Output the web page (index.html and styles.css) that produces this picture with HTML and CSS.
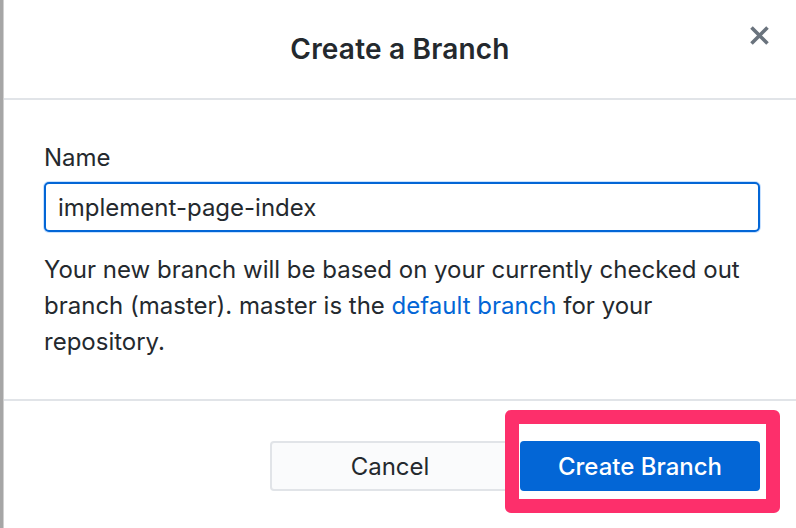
FILE: index.html
```html
<!DOCTYPE html>
<html lang="en">
<head>
<meta charset="utf-8">
<title>Create a Branch</title>
<link rel="stylesheet" href="styles.css">
</head>
<body>
<div class="screen">
  <div class="dialog">
    <header class="dialog-header">
      <span></span>
      <h1 class="dialog-title">Create a Branch</h1>
      <button class="close" aria-label="Close">
        <svg width="21" height="21" viewBox="0 0 21 21"><path d="M2.5 2.5 L18.5 18.5 M18.5 2.5 L2.5 18.5" stroke="#6a737d" stroke-width="3.6" stroke-linecap="butt" fill="none"/></svg>
      </button>
    </header>
    <section class="dialog-content">
      <label class="field-label" for="branch-name">Name</label>
      <input class="text-input" id="branch-name" type="text" value="implement-page-index">
      <p class="description">Your new branch will be based on your currently checked out branch (master). master is the <a class="link" href="#">default branch</a> for your repository.</p>
    </section>
    <footer class="dialog-footer">
      <button class="btn btn-secondary">Cancel</button>
      <span class="highlight-wrap">
        <button class="btn btn-primary">Create Branch</button>
        <span class="highlight"></span>
      </span>
    </footer>
  </div>
</div>
</body>
</html>
```
FILE: styles.css
```css
html, body {
  margin: 0;
  padding: 0;
  background: #ffffff;
}
body {
  font-family: "Inter", "Liberation Sans", sans-serif;
  color: #24292e;
  width: 796px;
  height: 528px;
  overflow: hidden;
}
.screen {
  display: flex;
  height: 528px;
  background: #a6a6a6;
  padding-left: 3px;
}
.dialog {
  flex: 1;
  background: #ffffff;
  border-left: 1px solid #d0d0d0;
  display: flex;
  flex-direction: column;
}
.dialog-header {
  height: 98px;
  border-bottom: 2px solid #e1e4e8;
  display: grid;
  grid-template-columns: 1fr auto 1fr;
  align-items: start;
}
.dialog-title {
  margin: 0;
  padding-top: 31px;
  font-size: 28px;
  line-height: 36px;
  font-weight: 600;
  letter-spacing: 0.2px;
}
.close {
  justify-self: end;
  margin: 25px 26px 0 0;
  padding: 0;
  border: 0;
  background: none;
  width: 21px;
  height: 21px;
  display: flex;
}
.dialog-content {
  padding: 40px 36px 39px 40px;
  display: flex;
  flex-direction: column;
  font-size: 24px;
  line-height: 36px;
  border-bottom: 2px solid #e1e4e8;
}
.field-label {
  display: block;
  margin-bottom: 6px;
}
.text-input {
  box-sizing: border-box;
  height: 50px;
  margin: 0;
  padding: 0 12px;
  border: 2px solid #0366d6;
  border-radius: 5px;
  box-shadow: 0 0 0 1px #c8e1ff;
  font-family: inherit;
  font-size: 24px;
  color: #24292e;
  outline: none;
}
.description {
  margin: 20px 0 0 0;
}
.link {
  color: #0366d6;
  text-decoration: none;
}
.dialog-footer {
  padding: 40px 36px 0 0;
  display: flex;
  justify-content: flex-end;
  gap: 10px;
}
.btn {
  box-sizing: border-box;
  width: 240px;
  height: 50px;
  border-radius: 4px;
  font-family: inherit;
  font-size: 24px;
  padding: 0;
}
.btn-secondary {
  background: #fafbfc;
  border: 2px solid #e1e4e8;
  color: #24292e;
}
.btn-primary {
  background: #0366d6;
  border: 0;
  color: #ffffff;
  font-weight: 500;
  display: block;
}
.highlight-wrap {
  position: relative;
  display: block;
}
.highlight {
  position: absolute;
  left: -15px;
  top: -31px;
  right: -20px;
  bottom: -22px;
  border: 14px solid #fd2f6b;
  border-radius: 6px;
  box-sizing: border-box;
}
```
